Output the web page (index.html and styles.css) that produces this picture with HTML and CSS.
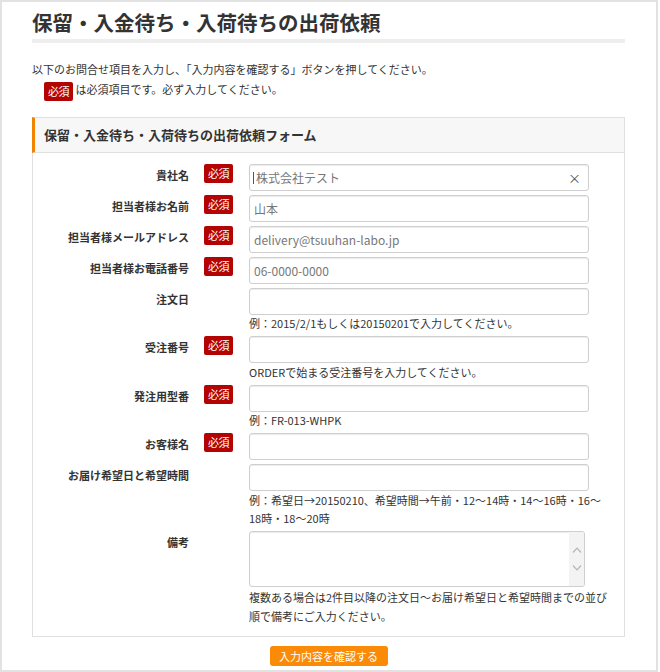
FILE: index.html
```html
<!DOCTYPE html>
<html lang="ja">
<head>
<meta charset="utf-8">
<title>保留・入金待ち・入荷待ちの出荷依頼</title>
<link rel="stylesheet" href="styles.css">
</head>
<body>
<div class="frame">
  <h1 class="page-title">保留・入金待ち・入荷待ちの出荷依頼</h1>
  <div class="intro">
    <p class="intro-line">以下のお問合せ項目を入力し、「入力内容を確認する」ボタンを押してください。</p>
    <p class="intro-line intro-req"><span class="req">必須</span> は必須項目です。必ず入力してください。</p>
  </div>

  <form class="form-box">
    <div class="form-head">保留・入金待ち・入荷待ちの出荷依頼フォーム</div>
    <div class="form-body">
      <div class="label">貴社名</div>
      <div class="badge-cell"><span class="req">必須</span></div>
      <div class="field">
        <div class="clearable">
          <input class="text" type="text" placeholder="株式会社テスト">
          <span class="caret"></span>
          <span class="clear">×</span>
        </div>
      </div>

      <div class="label">担当者様お名前</div>
      <div class="badge-cell"><span class="req">必須</span></div>
      <div class="field"><input class="text" type="text" placeholder="山本"></div>

      <div class="label">担当者様メールアドレス</div>
      <div class="badge-cell"><span class="req">必須</span></div>
      <div class="field"><input class="text" type="text" placeholder="delivery@tsuuhan-labo.jp"></div>

      <div class="label">担当者様お電話番号</div>
      <div class="badge-cell"><span class="req">必須</span></div>
      <div class="field"><input class="text" type="text" placeholder="06-0000-0000"></div>

      <div class="label">注文日</div>
      <div class="badge-cell"></div>
      <div class="field">
        <input class="text" type="text">
        <p class="help">例：2015/2/1もしくは20150201で入力してください。</p>
      </div>

      <div class="label">受注番号</div>
      <div class="badge-cell"><span class="req">必須</span></div>
      <div class="field">
        <input class="text" type="text">
        <p class="help">ORDERで始まる受注番号を入力してください。</p>
      </div>

      <div class="label">発注用型番</div>
      <div class="badge-cell"><span class="req">必須</span></div>
      <div class="field">
        <input class="text" type="text">
        <p class="help">例：FR-013-WHPK</p>
      </div>

      <div class="label">お客様名</div>
      <div class="badge-cell"><span class="req">必須</span></div>
      <div class="field"><input class="text" type="text"></div>

      <div class="label">お届け希望日と希望時間</div>
      <div class="badge-cell"></div>
      <div class="field">
        <input class="text" type="text">
        <p class="help">例：希望日→20150210、希望時間→午前・12～14時・14～16時・16～<br>18時・18～20時</p>
      </div>

      <div class="label">備考</div>
      <div class="badge-cell"></div>
      <div class="field">
        <div class="area-wrap">
          <textarea class="area"></textarea>
          <span class="scrollbar">
            <svg class="chev" viewBox="0 0 10 6" width="10" height="6"><path d="M1 5.5 L5 1.2 L9 5.5" fill="none" stroke="#b5b5b5" stroke-width="1.2"/></svg>
            <svg class="chev" viewBox="0 0 10 6" width="10" height="6"><path d="M1 0.5 L5 4.8 L9 0.5" fill="none" stroke="#b5b5b5" stroke-width="1.2"/></svg>
          </span>
        </div>
        <p class="help help-area">複数ある場合は2件目以降の注文日～お届け希望日と希望時間までの並び<br>順で備考にご入力ください。</p>
      </div>
    </div>
  </form>

  <div class="actions">
    <button class="submit" type="button">入力内容を確認する</button>
  </div>
</div>
</body>
</html>
```

FILE: styles.css
```css
* { box-sizing: border-box; }

html, body {
  margin: 0;
  padding: 0;
  background: #fff;
}

body {
  font-family: "Noto Sans CJK JP", "Noto Sans", sans-serif;
  color: #333;
}

.frame {
  width: 658px;
  height: 672px;
  border: 2px solid #e2e2e2;
  padding: 8px 31px 0 30px;
}

.page-title {
  margin: 0;
  font-size: 20.5px;
  line-height: 24px;
  font-weight: bold;
  color: #333;
  padding-bottom: 5px;
  border-bottom: 4px solid #eeeeee;
}

.intro {
  margin-top: 16px;
}

.intro-line {
  margin: 0;
  font-size: 11px;
  line-height: 20px;
  color: #333;
}

.intro-req {
  padding-left: 12px;
}

.req {
  display: inline-block;
  width: 29px;
  height: 19px;
  line-height: 19px;
  text-align: center;
  background: #b30303;
  color: #fff;
  font-size: 11px;
  border-radius: 2px;
  vertical-align: middle;
  letter-spacing: -0.5px;
}

.form-box {
  margin: 16px 0 0;
}

.form-head {
  border: 1px solid #e0e0e0;
  border-left: 3px solid #f08300;
  background: #f7f7f7;
  height: 36px;
  line-height: 33px;
  padding-left: 9px;
  font-size: 13px;
  font-weight: bold;
  color: #333;
}

.form-body {
  border: 1px solid #e0e0e0;
  border-top: none;
  padding: 11px 0 10px;
  display: grid;
  grid-template-columns: 156px 29px 350px;
  column-gap: 15px;
  row-gap: 4px;
}

.label {
  text-align: right;
  font-size: 11px;
  font-weight: bold;
  line-height: 23px;
  color: #333;
}

.badge-cell .req {
  vertical-align: top;
}

.field {
  padding-left: 1px;
}

.text {
  display: block;
  width: 340px;
  height: 27px;
  border: 1px solid #cfcfcf;
  border-radius: 3px;
  box-shadow: inset 0 1px 1px rgba(0, 0, 0, 0.08);
  padding: 0 4px;
  font-family: "Noto Sans CJK JP", "Noto Sans", sans-serif;
  font-size: 12px;
  color: #333;
  background: #fff;
  outline: none;
}

.text::placeholder {
  color: #777;
  opacity: 1;
}

.clearable {
  position: relative;
  width: 340px;
}

.caret {
  position: absolute;
  left: 4px;
  top: 8px;
  width: 1px;
  height: 12px;
  background: #555;
}

.clearable .text {
  padding-left: 6px;
}

.clear {
  position: absolute;
  right: 8px;
  top: 0;
  line-height: 27px;
  font-size: 13px;
  color: #555;
}

.help {
  margin: -0.5px 0 0;
  font-size: 11px;
  line-height: 18px;
  color: #333;
  white-space: nowrap;
}

.help-area {
  margin-top: 1px;
  line-height: 19px;
}

.area-wrap {
  position: relative;
  width: 336px;
  height: 56px;
}

.area {
  display: block;
  width: 336px;
  height: 56px;
  border: 1px solid #cfcfcf;
  border-radius: 3px;
  box-shadow: inset 0 1px 1px rgba(0, 0, 0, 0.08);
  resize: none;
  outline: none;
  background: #fff;
}

.scrollbar {
  position: absolute;
  right: 1px;
  top: 1px;
  bottom: 1px;
  width: 15px;
  background: #f3f3f3;
  display: flex;
  flex-direction: column;
  align-items: center;
  justify-content: center;
  gap: 12px;
  border-radius: 0 2px 2px 0;
}

.chev {
  display: block;
}

.actions {
  display: flex;
  justify-content: center;
  margin-top: 9px;
}

.submit {
  width: 118px;
  height: 20px;
  border: none;
  border-radius: 3px;
  background: #fb8a07;
  color: #fff;
  font-family: "Noto Sans CJK JP", "Noto Sans", sans-serif;
  font-size: 11px;
  line-height: 20px;
  padding: 0;
}
```
